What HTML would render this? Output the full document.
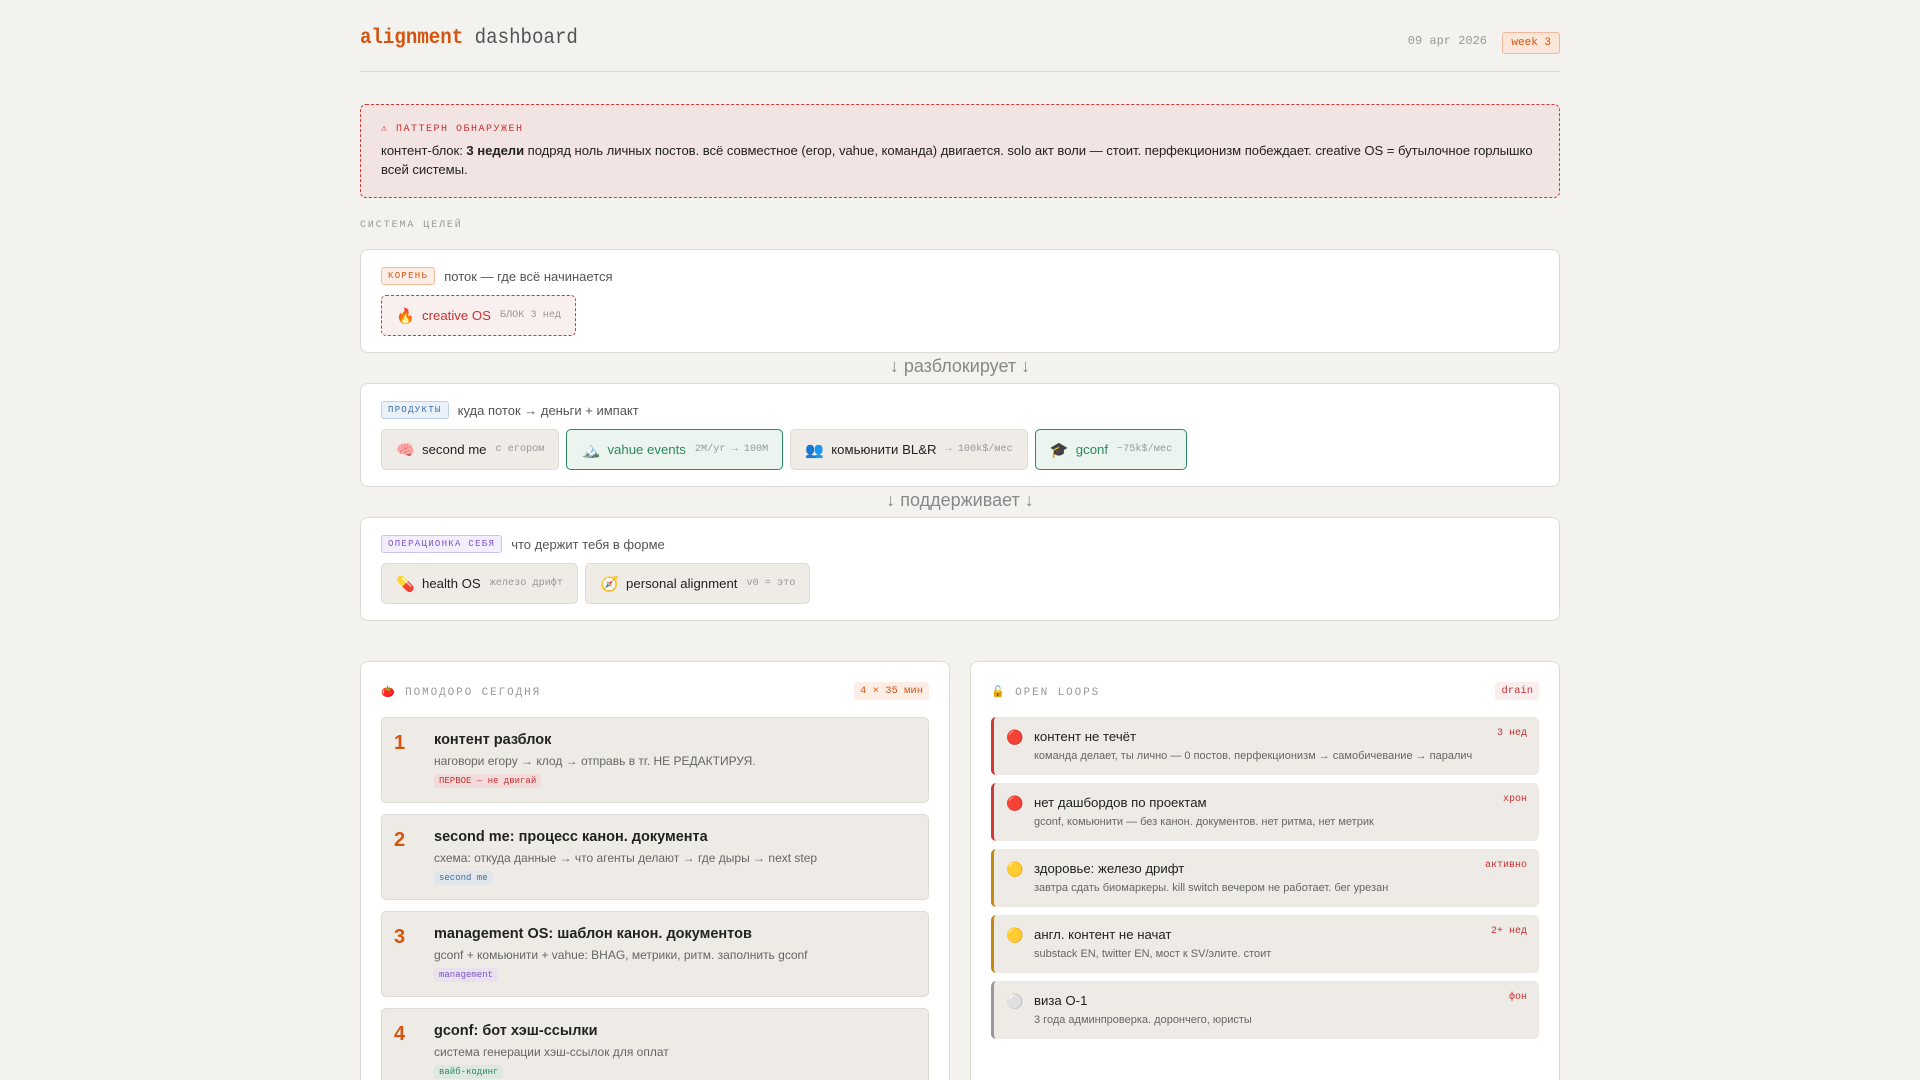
<!DOCTYPE html>
<html><head><meta charset="utf-8"><style>
*{box-sizing:border-box;margin:0;padding:0}
html,body{width:1920px;height:1080px;overflow:hidden}
body{background:#f4f2ee;font-family:"Liberation Sans","Noto Sans CJK SC",sans-serif;color:#222;position:relative}
.mono{font-family:"Liberation Mono","DejaVu Sans Mono",monospace}
.wrap{position:absolute;left:360px;width:1200px;top:0;height:1080px;overflow:hidden}
.hdr{position:absolute;left:0;top:24px;width:1200px;height:48px;border-bottom:1px solid #dcd9d3}
.title{font-size:21px;position:absolute;top:3px;left:0;color:#555;transform:scaleX(0.91);transform-origin:0 0;white-space:nowrap}
.title b{color:#d4550f}
.date{position:absolute;right:73px;top:10px;font-size:12px;color:#999}
.week{position:absolute;right:0;top:8px;font-size:11px;color:#d4550f;background:#fbe6da;border:1px solid #f2b99a;border-radius:3px;padding:4px 8px}
.alert{position:absolute;top:104px;left:0;width:1200px;height:94px;background:#f2e4e3;border:1px dashed #cc3a3a;border-radius:6px;padding:18px 20px}
.alert .h{font-size:10px;letter-spacing:1.5px;color:#c83232;margin-bottom:6px}
.alert p{font-size:13.1px;line-height:19px;color:#222;letter-spacing:-0.05px}
.sec{position:absolute;top:220px;font-size:10px;letter-spacing:1.9px;color:#999}
.card{position:absolute;left:0;width:1200px;height:104px;background:#fff;border:1px solid #dedbd5;border-radius:8px;padding:16px 20px}
.tagrow{display:flex;align-items:center;height:20px;margin-bottom:9px}
.tag{font-size:9px;letter-spacing:1.3px;padding:3px 6px;border-radius:3px;margin-right:9px}
.tagrow span.d{font-size:13px;color:#555}
.chips{display:flex;gap:7px}
.chip{height:41px;display:flex;align-items:center;padding:0 14px;border-radius:5px;background:#efece8;border:1px solid #dedbd5;font-size:13.2px;color:#222}
.chip .i{font-size:15px;margin-right:10px;width:16px;text-align:center}
.chip .m{font-family:"Liberation Mono",monospace;font-size:10.2px;color:#999;margin-left:9px}
.chip.g{background:#ecf4f0;border:1.5px solid #2b8a5f;color:#2b8a5f}
.chip.r{background:#f9efef;border:1px dashed #cc3a3a;color:#c83232}
.arrow{position:absolute;width:1200px;text-align:center;font-size:18px;color:#888}
.panel{position:absolute;top:661px;width:590px;height:440px;background:#fff;border:1px solid #dedbd5;border-radius:8px;padding:20px}
.ph{height:20px;position:relative;margin-bottom:15px}
.ph .l{font-size:11px;letter-spacing:1.9px;color:#999;position:absolute;left:0;top:3px}
.ph .b{position:absolute;right:0;top:0;font-size:10.5px;padding:3px 6px;border-radius:3px}
.pom{position:relative;height:86px;background:#eeebe7;border:1px solid #dedbd5;border-radius:5px;margin-bottom:11px}
.pom .n{position:absolute;left:12px;top:14px;font-size:20px;font-weight:bold;color:#d4550f}
.pom .t{position:absolute;left:52px;top:14px;font-size:14.5px;font-weight:bold;color:#222}
.pom .s{position:absolute;left:52px;top:36px;font-size:12px;color:#666}
.pom .k{position:absolute;left:52px;top:56px;font-size:9px;padding:2px 5px;border-radius:3px}
.loop{position:relative;height:58px;background:#eeebe7;border-radius:5px;margin-bottom:8px;border-left:3px solid #cc3a3a}
.loop.y{border-left-color:#c08a10}.loop.gr{border-left-color:#999}
.loop .i{position:absolute;left:12px;top:12px;font-size:14px}
.loop .t{position:absolute;left:40px;top:12px;font-size:13.2px;color:#222}
.loop .s{position:absolute;left:40px;top:33px;font-size:11px;color:#666}
.loop .r{position:absolute;right:12px;top:11px;font-size:10px;color:#c83232;font-family:"Liberation Mono",monospace}
</style></head><body><div class="wrap">
<div class="hdr"><div class="title mono"><b>alignment</b> dashboard</div><div class="date mono">09 apr 2026</div><div class="week mono">week 3</div></div>
<div class="alert"><div class="h mono">⚠ ПАТТЕРН ОБНАРУЖЕН</div><p>контент-блок: <b>3 недели</b> подряд ноль личных постов. всё совместное (егор, vahue, команда) двигается. solo акт воли — стоит. перфекционизм побеждает. creative OS = бутылочное горлышко всей системы.</p></div>
<div class="sec mono">СИСТЕМА ЦЕЛЕЙ</div>
<div class="card" style="top:249px"><div class="tagrow"><span class="tag mono" style="background:#fdeee5;border:1px solid #f2b99a;color:#d4550f">КОРЕНЬ</span><span class="d">поток — где всё начинается</span></div>
<div class="chips"><div class="chip r"><span class="i">🔥</span>creative OS<span class="m">БЛОК 3 нед</span></div></div></div>
<div class="arrow" style="top:356px">↓ разблокирует ↓</div>
<div class="card" style="top:383px"><div class="tagrow"><span class="tag mono" style="background:#eaf1f8;border:1px solid #b9d0e8;color:#3a6ea5">ПРОДУКТЫ</span><span class="d">куда поток → деньги + импакт</span></div>
<div class="chips"><div class="chip"><span class="i">🧠</span>second me<span class="m">с егором</span></div><div class="chip g"><span class="i">🏔️</span>vahue events<span class="m">2M/yr → 100M</span></div><div class="chip"><span class="i">👥</span>комьюнити BL&amp;R<span class="m">→ 100k$/мес</span></div><div class="chip g"><span class="i">🎓</span>gconf<span class="m">~75k$/мес</span></div></div></div>
<div class="arrow" style="top:490px">↓ поддерживает ↓</div>
<div class="card" style="top:517px"><div class="tagrow"><span class="tag mono" style="background:#f2eefc;border:1px solid #cfc2f0;color:#7a55c8">ОПЕРАЦИОНКА СЕБЯ</span><span class="d">что держит тебя в форме</span></div>
<div class="chips"><div class="chip"><span class="i">💊</span>health OS<span class="m">железо дрифт</span></div><div class="chip"><span class="i">🧭</span>personal alignment<span class="m">v0 = это</span></div></div></div>

<div class="panel" style="left:0"><div class="ph"><span class="l mono">🍅 ПОМОДОРО СЕГОДНЯ</span><span class="b mono" style="background:#fdeee5;color:#d4550f">4 × 35 мин</span></div>
<div class="pom"><div class="n">1</div><div class="t">контент разблок</div><div class="s">наговори егору → клод → отправь в тг. НЕ РЕДАКТИРУЯ.</div><div class="k mono" style="background:#f2dcdb;color:#c83232">ПЕРВОЕ — не двигай</div></div>
<div class="pom"><div class="n">2</div><div class="t">second me: процесс канон. документа</div><div class="s">схема: откуда данные → что агенты делают → где дыры → next step</div><div class="k mono" style="background:#e1e6ea;color:#3a6ea5">second me</div></div>
<div class="pom"><div class="n">3</div><div class="t">management OS: шаблон канон. документов</div><div class="s">gconf + комьюнити + vahue: BHAG, метрики, ритм. заполнить gconf</div><div class="k mono" style="background:#e8e2ee;color:#7a55c8">management</div></div>
<div class="pom"><div class="n">4</div><div class="t">gconf: бот хэш-ссылки</div><div class="s">система генерации хэш-ссылок для оплат</div><div class="k mono" style="background:#dde8e0;color:#2b8a5f">вайб-кодинг</div></div>
</div>
<div class="panel" style="left:610px"><div class="ph"><span class="l mono">🔓 OPEN LOOPS</span><span class="b mono" style="background:#f9eded;color:#c83232">drain</span></div>
<div class="loop"><span class="i">🔴</span><span class="t">контент не течёт</span><span class="s">команда делает, ты лично — 0 постов. перфекционизм → самобичевание → паралич</span><span class="r">3 нед</span></div>
<div class="loop"><span class="i">🔴</span><span class="t">нет дашбордов по проектам</span><span class="s">gconf, комьюнити — без канон. документов. нет ритма, нет метрик</span><span class="r">хрон</span></div>
<div class="loop y"><span class="i">🟡</span><span class="t">здоровье: железо дрифт</span><span class="s">завтра сдать биомаркеры. kill switch вечером не работает. бег урезан</span><span class="r">активно</span></div>
<div class="loop y"><span class="i">🟡</span><span class="t">англ. контент не начат</span><span class="s">substack EN, twitter EN, мост к SV/элите. стоит</span><span class="r">2+ нед</span></div>
<div class="loop gr"><span class="i">⚪</span><span class="t">виза O-1</span><span class="s">3 года админпроверка. дорончего, юристы</span><span class="r">фон</span></div>
</div>
</div></body></html>
